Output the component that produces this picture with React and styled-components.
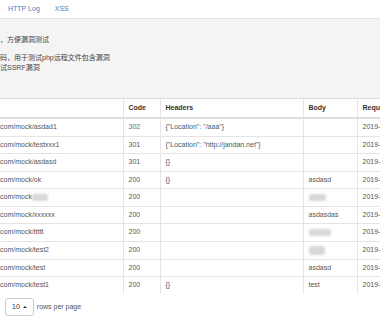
import styled, { createGlobalStyle } from "styled-components";

const GlobalStyle = createGlobalStyle`
  html, body {
    margin: 0;
    padding: 0;
    background: #fff;
    overflow: hidden;
  }
  body {
    font-family: "Liberation Sans", Arial, "Noto Sans CJK SC", sans-serif;
    font-size: 7px;
    color: #555;
  }
`;

const Page = styled.div`
  width: 380px;
  height: 320px;
  overflow: hidden;
`;

const Nav = styled.nav`
  display: flex;
  align-items: center;
  gap: 15px;
  height: 19px;
  padding-left: 8px;
  border-bottom: 1px solid #e2e2e2;
  box-sizing: border-box;
`;

const NavLink = styled.a`
  color: #4a82bf;
  font-size: 7px;
  text-decoration: none;
  line-height: 10px;
`;

const Panel = styled.div`
  background: #f4f4f4;
  border-bottom: 1px solid #dcdcdc;
  padding: 16px 0 25px;
  color: #444;
  font-family: "Liberation Sans", "Noto Sans CJK SC", sans-serif;
  font-size: 7px;
  line-height: 10px;

  p {
    margin: 0 0 8px;
    white-space: nowrap;
  }
  p:last-child {
    margin: 0;
  }
`;

const Table = styled.table`
  border-collapse: collapse;
  table-layout: fixed;
  width: 460px;
  font-size: 7px;
`;

const Th = styled.th`
  text-align: left;
  font-weight: bold;
  color: #333;
  padding: 4px 5px;
  line-height: 10px;
  border-bottom: 2px solid #ddd;
  border-left: ${(p) => (p.$first ? "none" : "1px solid #e6e6e6")};
  white-space: nowrap;
  overflow: hidden;
`;

const Td = styled.td`
  padding: 4px 5px;
  padding-left: ${(p) => (p.$first ? "0" : "5px")};
  line-height: 8.5px;
  border-top: 1px solid #e4e4e4;
  border-left: ${(p) => (p.$first ? "none" : "1px solid #e6e6e6")};
  color: ${(p) => p.$color || "#555"};
  white-space: nowrap;
  overflow: hidden;
`;

const Redact = styled.span`
  display: inline-block;
  vertical-align: middle;
  width: ${(p) => p.$w}px;
  height: ${(p) => p.$h || 7}px;
  background: #d8d8d8;
  border-radius: 2px;
  filter: blur(1.2px);
`;

const Footer = styled.div`
  display: flex;
  align-items: center;
  gap: 3px;
  padding: 4px 0 0 5px;
  color: #555;
  font-size: 7px;
`;

const Select = styled.div`
  display: flex;
  align-items: center;
  gap: 3px;
  height: 18px;
  box-sizing: border-box;
  padding: 0 6px 0 6px;
  border: 1px solid #ccc;
  border-radius: 3px;
  color: #333;
  background: #fff;
`;

const Caret = styled.span`
  width: 0;
  height: 0;
  border-left: 2px solid transparent;
  border-right: 2px solid transparent;
  border-bottom: 2px solid #333;
`;

const rows = [
  { path: "com/mock/asdad1", code: "302", headers: '{"Location": "/aaa"}', body: "" },
  { path: "com/mock/testxxx1", code: "301", headers: '{"Location": "http://jandan.net"}', body: "" },
  { path: "com/mock/asdasd", code: "301", headers: "{}", body: "" },
  { path: "com/mock/ok", code: "200", headers: "{}", body: "asdasd" },
  { path: "com/mock", hidden: 16, code: "200", headers: "", redact: 17 },
  { path: "com/mock/xxxxxx", code: "200", headers: "", body: "asdasdas" },
  { path: "com/mock/ttttt", code: "200", headers: "", redact: 22 },
  { path: "com/mock/test2", code: "200", headers: "", redact: 16, redactH: 9 },
  { path: "com/mock/test", code: "200", headers: "", body: "asdasd" },
  { path: "com/mock/test1", code: "200", headers: "{}", body: "test" },
];

const App = () => {
  return (
    <Page>
      <GlobalStyle />
      <Nav>
        <NavLink>HTTP Log</NavLink>
        <NavLink>XSS</NavLink>
      </Nav>
      <Panel>
        <p>，方便漏洞测试</p>
        <p>
          码，用于测试php远程文件包含漏洞
          <br />
          试SSRF漏洞
        </p>
      </Panel>
      <Table>
        <colgroup>
          <col style={{ width: 123 }} />
          <col style={{ width: 37 }} />
          <col style={{ width: 143 }} />
          <col style={{ width: 54 }} />
          <col style={{ width: 103 }} />
        </colgroup>
        <thead>
          <tr>
            <Th $first></Th>
            <Th>Code</Th>
            <Th>Headers</Th>
            <Th>Body</Th>
            <Th>Request Time</Th>
          </tr>
        </thead>
        <tbody>
          {rows.map((r, i) => (
            <tr key={i}>
              <Td $first>
                {r.path}
                {r.hidden && <Redact $w={r.hidden} />}
              </Td>
              <Td $color={r.code === "302" ? "#4c6f93" : "#555"}>{r.code}</Td>
              <Td $color="#3f5c6c">{r.headers}</Td>
              <Td>{r.redact ? <Redact $w={r.redact} $h={r.redactH} /> : r.body}</Td>
              <Td>2019-03-14 12:23:11</Td>
            </tr>
          ))}
        </tbody>
      </Table>
      <Footer>
        <Select>
          10 <Caret />
        </Select>
        rows per page
      </Footer>
    </Page>
  );
};

export default App;
